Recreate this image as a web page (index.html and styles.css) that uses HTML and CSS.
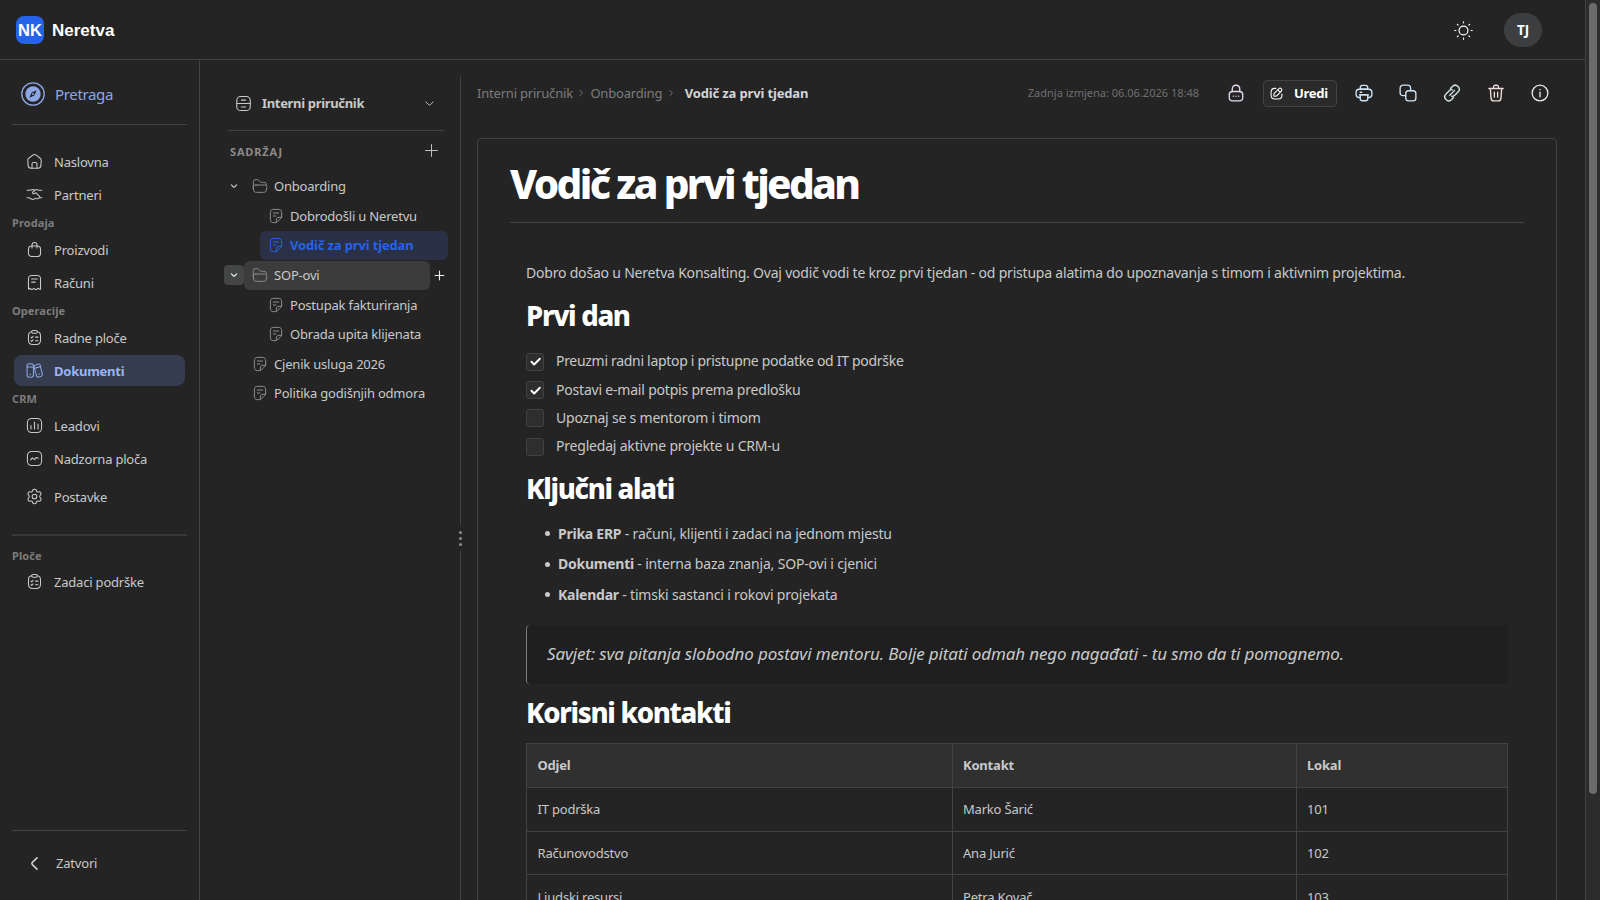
FILE: index.html
```html
<!DOCTYPE html>
<html lang="hr">
<head>
  <meta charset="UTF-8">
  <title>Neretva - Vodič za prvi tjedan</title>
  <link rel="stylesheet" href="styles.css">
</head>
<body>
  <!-- icons -->
  <svg class="sprite" width="0" height="0">
    <symbol id="i-home" viewBox="0 0 24 24"><path d="M9.500 3 3.900 7.400C2.900 8.100 2.400 9.300 2.500 10.500L3 17.500C3.200 20 4.500 21.500 7 21.500h10c2.500 0 3.800-1.500 4-4l.5-7c.1-1.200-.4-2.400-1.400-3.100L14.500 3c-1.600-1.200-3.400-1.200-5 0Z"/><path d="M8.500 21v-5.500a2 2 0 0 1 2-2h3a2 2 0 0 1 2 2V21"/></symbol>
    <symbol id="i-hands" viewBox="0 0 24 24"><path d="M1.500 6h3c2 0 2.500-1 4.500-1 1.500 0 2.500.5 3.500 1.500M22.500 6h-3c-2 0-2.500-1-4.500-1-2 0-3 1-5 3s0 3.500 2 2.500l2-1 5 5c1 1 .5 2-.5 2.500M1.500 16.500h2.500c2 0 3 2.500 5.500 2.500 1.500 0 2-.5 3.500-1.500M22.500 16.500h-3c-1.500 0-3.500 3-6 1"/></symbol>
    <symbol id="i-bag" viewBox="0 0 24 24"><path d="M8.500 10V5.500a3.500 3.500 0 0 1 7 0V10"/><rect x="3.500" y="7" width="17" height="15" rx="4.500"/></symbol>
    <symbol id="i-receipt" viewBox="0 0 24 24"><path d="M3.500 21V7c0-4 1-5 5-5h7c4 0 5 1 5 5v14c0 1-1 1-2 0-1-1-2-1-3 .3-1 1-2 1-3 0-1-1-2-1-3 0-1 1-2 1-3-.3-1-1-2-1-2 0-.5.500-1 .500-1 0Z"/><path d="M8 7h8M8 11.500h5"/></symbol>
    <symbol id="i-clip" viewBox="0 0 24 24"><rect x="8" y="2" width="8" height="4" rx="1.800"/><path d="M16 4c3.300.2 4.500 1.400 4.500 6v6c0 4-1 6-6 6h-5c-5 0-6-2-6-6v-6c0-4.600 1.200-5.800 4.500-6M13.500 11.500H17M13.500 16.500H17M7 11.500l1 1 2-2M7 16.500l1 1 2-2"/></symbol>
    <symbol id="i-books" viewBox="0 0 24 24"><rect x="1.500" y="2.500" width="9" height="19" rx="3"/><path d="M1.500 7h9M6 17v1"/><path d="m13 4.500 4-1.500c1.500-.500 2.500 0 3 1.500l3 12.500c.3 1.500-.3 2.500-1.500 3l-3.500 1.300c-1.500.400-2.500 0-3-1.500l-3.500-12C11 6.500 11.500 5 13 4.500ZM11.800 9l9-2.500M18.500 16.500v1"/></symbol>
    <symbol id="i-chart" viewBox="0 0 24 24"><rect x="2" y="2" width="20" height="20" rx="6"/><path d="M7 17v-5M12 17V7M17 17v-7"/></symbol>
    <symbol id="i-trend" viewBox="0 0 24 24"><rect x="2" y="2" width="20" height="20" rx="6"/><path d="m6.500 14 2.500-3 3 2.500 2.500-3 3 1"/></symbol>
    <symbol id="i-gear" viewBox="0 0 24 24"><circle cx="12" cy="12" r="3.300"/><path d="m9.500 3.200c.6-1.900 4.400-1.900 5 0l.3 1c.3 1 1.300 1.600 2.300 1.400l1.300-.3c1.900-.4 3.700 2.700 2.400 4.100l-.8.900c-.8.900-.8 2.500 0 3.400l.8.900c1.300 1.400-.5 4.500-2.400 4.100l-1.300-.3c-1-.2-2 .4-2.300 1.400l-.3 1c-.6 1.900-4.400 1.900-5 0l-.3-1c-.3-1-1.300-1.600-2.300-1.400l-1.300.3c-1.900.4-3.700-2.700-2.400-4.100l.8-.9c.8-.9.8-2.500 0-3.400l-.8-.9C1.900 8 3.700 4.900 5.600 5.300l1.300.3c1 .2 2-.4 2.300-1.400Z"/></symbol>
    <symbol id="i-cabinet" viewBox="0 0 24 24"><rect x="2.500" y="2" width="19" height="20" rx="5.500"/><path d="M2.500 12h19M9 7.200h6M9 17h6"/></symbol>
    <symbol id="i-folder" viewBox="0 0 24 24"><path d="M21.500 11v-.5c0-3-1-4-4-4H14c-1 0-1.500-.2-2-1L10.500 3.700C10 3 9.500 2.500 8.300 2.500H6c-3 0-4 1-4 4V16"/><path d="M6 10.500h12.500c3 0 4 1 3.700 3.500l-.7 4c-.4 2.500-1.500 3.500-4 3.500h-11c-2.500 0-3.600-1-4-3.500l-.7-4c-.3-2.500.7-3.500 4.200-3.500Z"/></symbol>
    <symbol id="i-note" viewBox="0 0 24 24"><path d="M20.500 13V7.500c0-4-1.500-5.500-5.500-5.500H9C5 2 3.500 3.500 3.500 7.500v9C3.500 20.500 5 22 9 22h2.500c1 0 1.700-.3 2.400-1l5.600-5.600c.7-.7 1-1.400 1-2.400ZM12.500 21.500V18c0-2.500 1.500-4 4-4h4M8 7.500h8M8 12h4"/></symbol>
    <symbol id="i-down" viewBox="0 0 24 24"><path d="m4 8.500 6.500 6.500c.8.800 2.200.8 3 0L20 8.500"/></symbol>
    <symbol id="i-right" viewBox="0 0 24 24"><path d="m8.500 4 6.500 6.500c.8.800.8 2.200 0 3L8.500 20"/></symbol>
    <symbol id="i-left" viewBox="0 0 24 24"><path d="M15.500 4 9 10.500c-.8.800-.8 2.200 0 3l6.500 6.500"/></symbol>
    <symbol id="i-plus" viewBox="0 0 24 24"><path d="M2.500 12h19M12 2.500v19"/></symbol>
    <symbol id="i-sun" viewBox="0 0 24 24"><circle cx="12" cy="12" r="5.600"/><path d="M12 1v1.300M12 21.700V23M1 12h1.300M21.700 12H23M4.300 4.300l.8.800M18.900 18.900l.8.800M19.700 4.300l-.8.800M5.100 18.900l-.8.800"/></symbol>
    <symbol id="i-lock" viewBox="0 0 24 24"><path d="M7 10V7c0-3 1.500-5.300 5-5.300S17 4 17 7v3"/><rect x="3" y="10" width="18" height="12.500" rx="4.500"/><path d="M8.500 16.200h.1M12 16.200h.1M15.500 16.200h.1"/></symbol>
    <symbol id="i-edit" viewBox="0 0 24 24"><path d="M11 2.500H9c-5 0-7 2-7 7V15c0 5 2 7 7 7h6c5 0 7-2 7-7v-2"/><path d="m16 3.500-7.700 7.700c-.4.4-.7 1-.8 1.600L7 15.700c-.2 1 .5 1.600 1.500 1.400l2.800-.5c.6-.1 1.200-.4 1.600-.8L20.500 8c1.500-1.500 2-3 0-5s-3-1-4.500.500ZM15 4.800c.7 2.200 2 3.500 4.200 4.200"/></symbol>
    <symbol id="i-print" viewBox="0 0 24 24"><path d="M7 7V5c0-2 .7-3.200 3-3.200h4c2.300 0 3 1.200 3 3.200v2Z"/><path d="M7 18H5.500C3 18 1.500 16.500 1.500 14v-2.500C1.500 9 3 7 5.500 7h13C21 7 22.500 9 22.500 11.500V14c0 2.500-1.500 4-4 4H17M6 14.500h12M7 11h2"/><path d="M7 14.500h10v5c0 2-1 2.800-3 2.800h-4c-2 0-3-.8-3-2.800Z"/></symbol>
    <symbol id="i-copy" viewBox="0 0 24 24"><rect x="9" y="9" width="13.500" height="13.500" rx="3.800"/><path d="M9 15.500H5.800c-3 0-4.300-1.300-4.300-4.300V5.800c0-3 1.300-4.300 4.300-4.300h5.400c3 0 4.300 1.300 4.300 4.300V9"/></symbol>
    <symbol id="i-link" viewBox="0 0 24 24"><path d="m9 15 6.500-6.500"/><path d="m10 6 2.500-2.700c2.500-2.500 5.500-2 7.500 0s2.500 5 0 7.500l-4 4c-1.500 1.500-3 2-4.500 1.500M14 18l-2.500 2.700c-2.500 2.500-5.500 2-7.500 0s-2.500-5 0-7.500l4-4c1.500-1.500 3-2 4.500-1.500"/></symbol>
    <symbol id="i-trash" viewBox="0 0 24 24"><path d="M2.500 6h19M8.500 5.500 9 3.200c.2-1 .7-1.500 2-1.500h2c1.300 0 1.800.5 2 1.500l.5 2.300M4.500 6.500l.8 12c.2 2.500.7 4 3.500 4h6.400c2.800 0 3.300-1.500 3.500-4l.8-12M9.800 11v6.500M14.200 11v6.500"/></symbol>
    <symbol id="i-info" viewBox="0 0 24 24"><circle cx="12" cy="12" r="10.500"/><path d="M12 11v6M12 7.200v.3"/></symbol>
    <symbol id="i-check" viewBox="0 0 24 24"><path d="m4.500 12.500 5 5L20 7"/></symbol>
    <symbol id="i-compass" viewBox="0 0 24 24"><circle cx="12" cy="12" r="11.200"/><circle class="fill" cx="12" cy="12" r="7.700"/><path class="needle" d="m15.700 8.300-5 2.200-2.400 5.200 5-2.200Z"/><circle class="fill" cx="12" cy="12" r="1"/></symbol>
  </svg>

  <div class="window">
    <header class="topbar">
      <div class="logo">NK</div>
      <div class="brand">Neretva</div>
      <svg class="icon theme"><use href="#i-sun"/></svg>
      <div class="avatar">TJ</div>
    </header>

    <div class="columns">
      <nav class="sidebar">
        <a class="search"><svg class="icon compass"><use href="#i-compass"/></svg>Pretraga</a>
        <div class="nav">
          <a class="nav-item"><svg class="icon"><use href="#i-home"/></svg>Naslovna</a>
          <a class="nav-item"><svg class="icon"><use href="#i-hands"/></svg>Partneri</a>
          <div class="nav-label">Prodaja</div>
          <a class="nav-item"><svg class="icon"><use href="#i-bag"/></svg>Proizvodi</a>
          <a class="nav-item"><svg class="icon"><use href="#i-receipt"/></svg>Računi</a>
          <div class="nav-label">Operacije</div>
          <a class="nav-item"><svg class="icon"><use href="#i-clip"/></svg>Radne ploče</a>
          <a class="nav-item active"><svg class="icon"><use href="#i-books"/></svg>Dokumenti</a>
          <div class="nav-label">CRM</div>
          <a class="nav-item"><svg class="icon"><use href="#i-chart"/></svg>Leadovi</a>
          <a class="nav-item"><svg class="icon"><use href="#i-trend"/></svg>Nadzorna ploča</a>
          <a class="nav-item settings"><svg class="icon"><use href="#i-gear"/></svg>Postavke</a>
        </div>
        <div class="boards">
          <div class="nav-label">Ploče</div>
          <a class="nav-item"><svg class="icon"><use href="#i-clip"/></svg>Zadaci podrške</a>
        </div>
        <a class="close"><svg class="icon"><use href="#i-left"/></svg>Zatvori</a>
      </nav>

      <aside class="tree">
        <div class="space">
          <svg class="icon"><use href="#i-cabinet"/></svg>
          <span>Interni priručnik</span>
          <svg class="icon arrow"><use href="#i-down"/></svg>
        </div>
        <div class="tree-head">
          <span>SADRŽAJ</span>
          <svg class="icon"><use href="#i-plus"/></svg>
        </div>
        <div class="row">
          <span class="toggle"><svg class="icon"><use href="#i-down"/></svg></span>
          <span class="node"><svg class="icon"><use href="#i-folder"/></svg>Onboarding</span>
        </div>
        <div class="row child">
          <span class="node"><svg class="icon"><use href="#i-note"/></svg>Dobrodošli u Neretvu</span>
        </div>
        <div class="row child">
          <span class="node selected"><svg class="icon"><use href="#i-note"/></svg>Vodič za prvi tjedan</span>
        </div>
        <div class="row hover">
          <span class="toggle"><svg class="icon"><use href="#i-down"/></svg></span>
          <span class="node"><svg class="icon"><use href="#i-folder"/></svg>SOP-ovi</span>
          <svg class="icon add"><use href="#i-plus"/></svg>
        </div>
        <div class="row child">
          <span class="node"><svg class="icon"><use href="#i-note"/></svg>Postupak fakturiranja</span>
        </div>
        <div class="row child">
          <span class="node"><svg class="icon"><use href="#i-note"/></svg>Obrada upita klijenata</span>
        </div>
        <div class="row leaf">
          <span class="node"><svg class="icon"><use href="#i-note"/></svg>Cjenik usluga 2026</span>
        </div>
        <div class="row leaf">
          <span class="node"><svg class="icon"><use href="#i-note"/></svg>Politika godišnjih odmora</span>
        </div>
      </aside>

      <div class="splitter"><div class="grip"><i></i><i></i><i></i></div></div>

      <main class="main">
        <div class="toolbar">
          <span class="crumb">Interni priručnik</span>
          <svg class="icon sep"><use href="#i-right"/></svg>
          <span class="crumb">Onboarding</span>
          <svg class="icon sep"><use href="#i-right"/></svg>
          <span class="crumb current">Vodič za prvi tjedan</span>
          <span class="changed">Zadnja izmjena: 06.06.2026 18:48</span>
          <svg class="icon lock"><use href="#i-lock"/></svg>
          <button class="edit"><svg class="icon"><use href="#i-edit"/></svg>Uredi</button>
          <div class="actions">
            <svg class="icon blue"><use href="#i-print"/></svg>
            <svg class="icon blue"><use href="#i-copy"/></svg>
            <svg class="icon green"><use href="#i-link"/></svg>
            <svg class="icon red"><use href="#i-trash"/></svg>
            <svg class="icon"><use href="#i-info"/></svg>
          </div>
        </div>

        <article class="doc">
          <h1>Vodič za prvi tjedan</h1>
          <div class="content">
            <p>Dobro došao u Neretva Konsalting. Ovaj vodič vodi te kroz prvi tjedan - od pristupa alatima do upoznavanja s timom i aktivnim projektima.</p>
            <h2>Prvi dan</h2>
            <ul class="tasks">
              <li><span class="box"><svg class="icon"><use href="#i-check"/></svg></span>Preuzmi radni laptop i pristupne podatke od IT podrške</li>
              <li><span class="box"><svg class="icon"><use href="#i-check"/></svg></span>Postavi e-mail potpis prema predlošku</li>
              <li><span class="box"></span>Upoznaj se s mentorom i timom</li>
              <li><span class="box"></span>Pregledaj aktivne projekte u CRM-u</li>
            </ul>
            <h2 class="second">Ključni alati</h2>
            <ul class="tools">
              <li><strong>Prika ERP</strong> - računi, klijenti i zadaci na jednom mjestu</li>
              <li><strong>Dokumenti</strong> - interna baza znanja, SOP-ovi i cjenici</li>
              <li><strong>Kalendar</strong> - timski sastanci i rokovi projekata</li>
            </ul>
            <blockquote>Savjet: sva pitanja slobodno postavi mentoru. Bolje pitati odmah nego nagađati - tu smo da ti pomognemo.</blockquote>
            <h2 class="third">Korisni kontakti</h2>
            <table>
              <tr><th class="c1">Odjel</th><th class="c2">Kontakt</th><th>Lokal</th></tr>
              <tr><td>IT podrška</td><td>Marko Šarić</td><td>101</td></tr>
              <tr><td>Računovodstvo</td><td>Ana Jurić</td><td>102</td></tr>
              <tr><td>Ljudski resursi</td><td>Petra Kovač</td><td>103</td></tr>
            </table>
          </div>
        </article>
      </main>
    </div>
  </div>
  <div class="scrollbar"><div class="thumb"></div></div>
</body>
</html>
```
FILE: styles.css
```css
* { box-sizing: border-box; }
body {
  display: flex;
  height: 900px;
  margin: 0;
  overflow: hidden;
  background: #242424;
  color: #c9c9c9;
  font: 13px/20px "Noto Sans", "Open Sans", sans-serif;
  letter-spacing: -0.2px;
}
.sprite { position: absolute; }
.icon {
  flex: none;
  width: 17px;
  height: 17px;
  fill: none;
  stroke: currentColor;
  stroke-width: 1.5;
  stroke-linecap: round;
  stroke-linejoin: round;
}

.window {
  display: flex;
  flex-direction: column;
  width: 1586px;
  height: 900px;
  border-right: 1px solid #424242;
}
.scrollbar { width: 14px; padding: 3px 3px 0; background: #2c2c2c; }
.thumb { width: 8px; height: 791px; border-radius: 4px; background: #6b6b6b; }

/* top bar */
.topbar {
  display: flex;
  flex: none;
  align-items: center;
  height: 60px;
  padding: 0 43px 0 16px;
  border-bottom: 1px solid #424242;
}
.logo {
  width: 28px;
  height: 28px;
  margin-top: 1px;
  border-radius: 8px;
  background: #2563eb;
  color: #fff;
  font: bold 16.5px/28px "Liberation Sans", sans-serif;
  letter-spacing: 0;
  text-align: center;
}
.brand {
  margin: 2px 0 0 8px;
  color: #fff;
  font: bold 17px/28px "Liberation Sans", sans-serif;
  letter-spacing: 0;
}
.theme { width: 19px; height: 19px; margin: 1px 0 0 auto; color: #fff; }
.avatar {
  width: 38px;
  height: 34px;
  margin: 1px 0 0 31px;
  border-radius: 17px;
  background: #3c3e40;
  color: #fff;
  font-size: 13.5px;
  font-weight: 700;
  line-height: 34px;
  text-align: center;
}

.columns { display: flex; flex: 1; min-height: 0; }

/* left navigation */
.sidebar {
  display: flex;
  flex-direction: column;
  flex: none;
  width: 200px;
  padding: 0 12px;
  border-right: 1px solid #424242;
}
.search {
  display: flex;
  align-items: center;
  gap: 10px;
  height: 65px;
  padding: 3px 0 0 9px;
  border-bottom: 1px solid #424242;
  color: #8ea7e4;
  font-size: 15px;
  letter-spacing: -0.35px;
}
.compass { width: 24px; height: 24px; stroke-width: 1.3; }
.fill { fill: currentColor; stroke: none; }
.needle { fill: #242424; stroke: none; }
.nav { display: flex; flex-direction: column; padding: 20px 0 21px; }
.nav-item {
  display: flex;
  align-items: center;
  gap: 11px;
  width: 171px;
  height: 31px;
  margin: 1px 2px;
  padding-left: 12px;
  border-radius: 8px;
}
.active { background: #343c4e; color: #9db2f5; font-weight: 700; letter-spacing: -0.25px; }
.active .icon { color: #8ea7e4; }
.settings { margin-top: 6px; }
.nav-label {
  height: 22px;
  padding-top: 2px;
  color: #7c7c7c;
  font-size: 11px;
  font-weight: 700;
  letter-spacing: 0.1px;
}
.boards { padding-top: 8px; border-top: 2px solid #383838; }
.boards .nav-item { margin-top: 0; }
.close {
  display: flex;
  align-items: center;
  gap: 13px;
  height: 70px;
  margin-top: auto;
  padding: 0 0 5px 14px;
  border-top: 1px solid #424242;
}
.close .icon { stroke-width: 2.400; }

/* document tree */
.tree { flex: none; width: 260px; padding: 16px 12px 0 24px; }
.space {
  display: flex;
  align-items: center;
  width: 216px;
  height: 55px;
  margin-left: 4px;
  padding: 0 9px 0 7px;
  border-bottom: 1px solid #424242;
  font-weight: 700;
  letter-spacing: -0.33px;
}
.space span { margin-left: 10px; }
.space .arrow { width: 11px; height: 11px; margin-left: auto; stroke-width: 2; }
.tree-head {
  display: flex;
  align-items: center;
  justify-content: space-between;
  height: 40.500px;
  padding: 2px 9px 0 6px;
  color: #8b8b8b;
  font-size: 11px;
  font-weight: 700;
  letter-spacing: 0.85px;
}
.tree-head .icon { width: 15px; height: 15px; margin-bottom: 4px; color: #c9c9c9; }
.row { display: flex; align-items: center; height: 29.600px; }
.toggle {
  display: flex;
  align-items: center;
  justify-content: center;
  width: 20px;
  height: 20px;
  border-radius: 4px;
}
.toggle .icon { width: 8px; height: 8px; stroke-width: 3.400; }
.node {
  display: flex;
  align-items: center;
  gap: 6px;
  height: 29px;
  padding-left: 8px;
  border-radius: 6px;
}
.node .icon { width: 16px; height: 16px; color: #8b8b8b; }
.child .node { width: 188px; margin-left: 36px; }
.leaf .node { margin-left: 20px; }
.node.selected { background: #2a3045; color: #2563eb; font-weight: 700; letter-spacing: -0.15px; }
.node.selected .icon { color: #2563eb; }
.hover .toggle { background: #444646; color: #eee; }
.hover .node { width: 186px; background: #3c3c3c; }
.add { width: 11px; height: 11px; margin-left: 4px; color: #eee; stroke-width: 2.400; }

.splitter {
  display: flex;
  align-items: center;
  flex: none;
  width: 1px;
  margin-top: 16px;
  padding-top: 100px;
  background: #424242;
}
.grip {
  display: flex;
  flex-direction: column;
  align-items: center;
  justify-content: center;
  gap: 3px;
  flex: none;
  width: 7px;
  height: 26px;
  margin: 0 -3px;
  background: #242424;
}
.grip i { width: 3px; height: 3px; border-radius: 2px; background: #8b8b8b; }

/* document */
.main { flex: 1; min-width: 0; padding: 0 28px 0 16px; overflow: hidden; }
.toolbar { display: flex; align-items: center; height: 78px; padding: 0 8px 12px 0; }
.crumb { color: #7c7c7c; }
.crumb.current { margin-left: 5px; color: #d4d4d4; font-weight: 700; letter-spacing: -0.15px; }
.sep { width: 8px; height: 8px; margin: 0 5px 0 4.500px; color: #7c7c7c; stroke-width: 2.800; }
.changed { margin-left: auto; color: #6f6f6f; font-size: 11px; letter-spacing: 0; }
.lock { width: 18px; height: 18px; margin: 0 18px 0 28px; color: #e4d9ec; stroke-width: 1.800; }
.edit {
  display: flex;
  align-items: center;
  gap: 11px;
  width: 74px;
  height: 27px;
  padding: 0 0 0 6px;
  border: 1px solid #424242;
  border-radius: 4px;
  background: #2a2a2a;
  color: #fff;
  font: 700 13px/20px "Noto Sans", "Open Sans", sans-serif;
  letter-spacing: -0.3px;
}
.edit .icon { width: 13px; height: 13px; stroke-width: 2; }
.actions { display: flex; gap: 26px; margin-left: 18px; color: #e8e8e8; }
.actions .icon { width: 18px; height: 18px; stroke-width: 1.800; }
.actions .blue { color: #cfe3f5; }
.actions .green { color: #d5e8e8; }
.actions .red { color: #ecdcd8; }

.doc {
  height: 900px;
  padding: 18px 32px 0;
  border: 1px solid #424242;
  border-radius: 4px;
}
h1, h2 { margin: 0; color: #fff; font-weight: 800; }
h1 {
  padding-bottom: 12px;
  border-bottom: 1px solid #424242;
  font-size: 40.500px;
  line-height: 53px;
  letter-spacing: -2.650px;
}
.content { padding: 38px 16px 0; font-size: 14px; }
p { margin: 0 0 13px; line-height: 24px; }
h2 { font-size: 27.500px; line-height: 36px; letter-spacing: -1.300px; }
.second { margin-top: 10px; }
.third { margin-top: 11px; }
ul { margin: 0; padding: 0; list-style: none; }
.tasks { margin-top: 13px; }
.tasks li { display: flex; align-items: center; gap: 12px; height: 28.400px; }
.tasks li:first-child { letter-spacing: -0.3px; }
.box {
  display: flex;
  align-items: center;
  justify-content: center;
  width: 18px;
  height: 18px;
  margin-top: 1px;
  border: 1px solid #424242;
  border-radius: 3px;
  background: #2e2e2e;
}
.box .icon { width: 13px; height: 13px; color: #fff; stroke-width: 3.500; }
.tools { margin-top: 12px; }
.tools li { display: flex; align-items: center; height: 30.500px; padding-left: 19px; white-space: pre; letter-spacing: -0.18px; }
.tools li::before {
  content: "";
  width: 5px;
  height: 5px;
  margin-right: 8px;
  border-radius: 3px;
  background: #c9c9c9;
}
.tools strong { letter-spacing: -0.25px; }
blockquote {
  height: 59px;
  margin: 15px 0 0;
  padding-left: 20px;
  border-left: 1px solid #7c7c7c;
  border-radius: 4px;
  background: #1f1f1f;
  font-size: 17px;
  font-style: italic;
  line-height: 58px;
  letter-spacing: -0.14px;
}
table { width: 100%; margin-top: 12px; border-collapse: collapse; font-size: 13px; }
th, td { height: 43.750px; padding: 0 10.500px; border: 1px solid #424242; text-align: left; }
th { background: #303030; }
.c1 { width: 425.500px; }
.c2 { width: 344px; }
```
